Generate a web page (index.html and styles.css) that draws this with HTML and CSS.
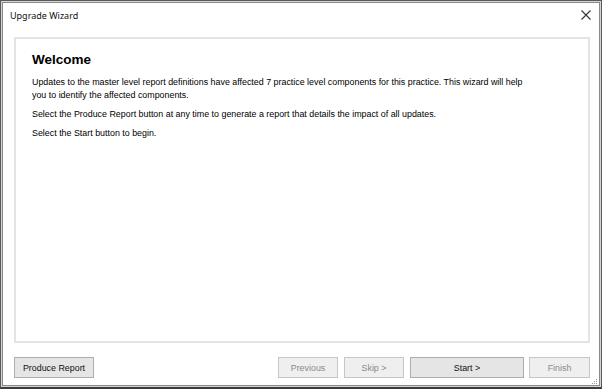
FILE: index.html
```html
<!DOCTYPE html>
<html>
<head>
    <title>Upgrade Wizard</title>
    <link rel="stylesheet" href="styles.css">
</head>
<body>
    <div class="window">
        <div class="titlebar">
            <span class="title">Upgrade Wizard</span>
            <svg class="close" width="10" height="10" viewBox="0 0 10 10">
                <path d="M0.5 0.5 L9.5 9.5 M9.5 0.5 L0.5 9.5" stroke="#333" stroke-width="1.1" fill="none"/>
            </svg>
        </div>

        <div class="wizard-body">
            <div class="page-panel">
                <h1>Welcome</h1>
                <p>Updates to the master level report definitions have affected 7 practice level components for this practice. This wizard will help you to identify the affected components.</p>
                <p>Select the Produce Report button at any time to generate a report that details the impact of all updates.</p>
                <p>Select the Start button to begin.</p>
            </div>

            <div class="button-row">
                <button class="btn btn-report">Produce Report</button>
                <div class="nav-buttons">
                    <button class="btn btn-small" disabled>Previous</button>
                    <button class="btn btn-small" disabled>Skip &gt;</button>
                    <button class="btn btn-start">Start &gt;</button>
                    <button class="btn btn-finish" disabled>Finish</button>
                </div>
            </div>
        </div>

        <div class="grip">
            <svg width="6" height="6" viewBox="0 0 6 6">
                <rect x="4" y="0" width="1" height="1" fill="#999"/>
                <rect x="2" y="2" width="1" height="1" fill="#999"/>
                <rect x="4" y="2" width="1" height="1" fill="#999"/>
                <rect x="0" y="4" width="1" height="1" fill="#999"/>
                <rect x="2" y="4" width="1" height="1" fill="#999"/>
                <rect x="4" y="4" width="1" height="1" fill="#999"/>
            </svg>
        </div>
    </div>
</body>
</html>
```

FILE: styles.css
```css
body {
    margin: 0;
    background-color: #ffffff;
    font-family: "Liberation Sans", Arial, sans-serif;
}
.window {
    position: relative;
    width: 602px;
    height: 389px;
    box-sizing: border-box;
    border: 1px solid #5a5a5a;
    border-bottom: 2px solid #3c3c3c;
    box-shadow: inset 0 0 0 1px #d4d4d4, inset 0 0 0 2px #8a8a8a;
    background: white;
    display: flex;
    flex-direction: column;
}
.titlebar {
    height: 29px;
    display: flex;
    align-items: center;
    justify-content: space-between;
    padding: 0 10px 0 9px;
}
.title {
    font-family: "Noto Sans", sans-serif;
    font-size: 9px;
    color: #111;
}
.close {
    display: block;
    margin-top: -1px;
}
.wizard-body {
    flex: 1;
    display: flex;
    flex-direction: column;
    padding: 7px 11px 0 13px;
}
.page-panel {
    height: 306px;
    box-sizing: border-box;
    border: 2px solid #e4e4e4;
    padding: 13px 16px 12px 16px;
}
h1 {
    margin: 0 0 8px 0;
    font-size: 13.5px;
    line-height: 16px;
    font-weight: bold;
    color: #000;
}
p {
    max-width: 500px;
    margin: 0 0 6px 0;
    font-size: 8.9px;
    line-height: 13px;
    color: #000;
}
.button-row {
    display: flex;
    justify-content: space-between;
    margin-top: 14px;
}
.nav-buttons {
    display: flex;
    gap: 6px;
}
.btn {
    height: 21px;
    padding: 0;
    border: 1px solid #adadad;
    background-color: #e5e5e5;
    font-family: "Liberation Sans", Arial, sans-serif;
    font-size: 8.9px;
    color: #111;
}
.btn:disabled {
    border-color: #c6c6c6;
    background-color: #efefef;
    color: #8a8a8a;
}
.btn-report {
    width: 80px;
}
.btn-small {
    width: 60px;
}
.btn-start {
    width: 114px;
}
.btn-finish {
    width: 61px;
    margin-left: -1px;
}
.grip {
    position: absolute;
    right: 3px;
    bottom: 2px;
    line-height: 0;
}
```
